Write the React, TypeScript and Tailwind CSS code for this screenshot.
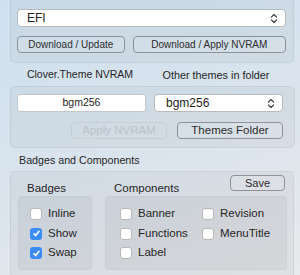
import React from "react";

const font = { fontFamily: '"Liberation Sans", Arial, sans-serif' };

function Chevrons() {
  return (
    <svg width="8" height="11" viewBox="0 0 8 11" fill="none" stroke="#444" strokeWidth="1.2" strokeLinecap="round" strokeLinejoin="round">
      <path d="M1.5 4 L4 1.5 L6.5 4" />
      <path d="M1.5 7 L4 9.5 L6.5 7" />
    </svg>
  );
}

function Check({ checked, label }: { checked?: boolean; label: string }) {
  return (
    <div className="flex items-center gap-[6px] h-[12px]">
      {checked ? (
        <div className="w-[12px] h-[12px] rounded-[3px] bg-[#3a8cf6] flex items-center justify-center">
          <svg width="9" height="9" viewBox="0 0 9 9" fill="none" stroke="white" strokeWidth="1.6" strokeLinecap="round" strokeLinejoin="round">
            <path d="M2 4.8 L3.7 6.6 L7 2.3" />
          </svg>
        </div>
      ) : (
        <div className="w-[12px] h-[12px] rounded-[3px] bg-white border border-[#b8b8b8]" />
      )}
      <span className="text-[11.5px] text-[#262626] leading-none">{label}</span>
    </div>
  );
}

function Btn({ children, className = "", disabled }: { children: React.ReactNode; className?: string; disabled?: boolean }) {
  return (
    <div
      className={
        "flex items-center justify-center rounded-[4px] border leading-none " +
        (disabled ? "border-[#c9ced3] text-[#bcc2c8] " : "border-[#8e9296] text-[#2d2d2d] bg-white/10 ") +
        className
      }
    >
      {children}
    </div>
  );
}

export default function App() {
  return (
    <div
      style={font}
      className="w-[300px] h-[275px] overflow-hidden bg-[linear-gradient(160deg,#cfe1f0_0%,#d8e3ed_45%,#e8e9eb_100%)] relative"
    >
      {/* Box 1 */}
      <div className="ml-[10px] w-[284px] mt-[-6px] h-[69px] rounded-[5px] bg-black/[0.035] border border-black/[0.05] pt-[14px] pl-[6px] pr-[7px]">
        <div className="h-[18px] rounded-[4px] bg-white border border-[#b9bcbf] flex items-center justify-between pl-[9px] pr-[7px]">
          <span className="text-[12px] text-[#1e1e1e]">EFI</span>
          <Chevrons />
        </div>
        <div className="flex mt-[9px] gap-[8px]">
          <Btn className="w-[108px] h-[17px] text-[10px]">Download / Update</Btn>
          <Btn className="w-[154px] h-[17px] text-[10px]">Download / Apply NVRAM</Btn>
        </div>
      </div>

      {/* labels */}
      <div className="flex h-[23px] items-center">
        <div className="w-[160px] text-center text-[10.5px] text-[#262626] pt-[1px]">Clover.Theme NVRAM</div>
        <div className="w-[112px] text-center text-[10.8px] text-[#262626] pt-[1px]">Other themes in folder</div>
      </div>

      {/* Box 2 */}
      <div className="ml-[10px] w-[285px] h-[62px] rounded-[5px] bg-black/[0.035] border border-black/[0.05] pt-[7px] pl-[6px] pr-[11px]">
        <div className="flex gap-[8px]">
          <div className="w-[129px] h-[18px] rounded-[3px] bg-white border border-[#c4c7ca] flex items-center justify-center text-[10.5px] text-[#1e1e1e]">
            bgm256
          </div>
          <div className="w-[129px] h-[18px] rounded-[4px] bg-white border border-[#b9bcbf] flex items-center justify-between pl-[11px] pr-[7px]">
            <span className="text-[12px] text-[#1e1e1e]">bgm256</span>
            <Chevrons />
          </div>
        </div>
        <div className="flex justify-end gap-[10px] mt-[10px]">
          <Btn disabled className="w-[96px] h-[17px] text-[11.5px]">Apply NVRAM</Btn>
          <Btn className="w-[106px] h-[17px] text-[11.5px]">Themes Folder</Btn>
        </div>
      </div>

      {/* Badges and Components */}
      <div className="pl-[19px] h-[23px] flex items-end pb-[5px] text-[10.7px] text-[#262626] leading-none">Badges and Components</div>
      <div className="ml-[10px] w-[284px] h-[110px] rounded-[5px] bg-black/[0.035] border border-black/[0.05] relative">
        <Btn className="absolute left-[219px] top-[3px] w-[55px] h-[16px] text-[11px]">Save</Btn>
        <div className="flex pl-[7px] pt-[11px] gap-[13px]">
          <div className="flex flex-col">
            <div className="pl-[9px] h-[13px] text-[11.5px] text-[#262626] leading-none">Badges</div>
            <div className="w-[74px] h-[74px] rounded-[4px] bg-black/[0.045] border border-black/[0.03] pl-[11px] pt-[11px] flex flex-col gap-[7.5px]">
              <Check label="Inline" />
              <Check checked label="Show" />
              <Check checked label="Swap" />
            </div>
          </div>
          <div className="flex flex-col">
            <div className="pl-[9px] h-[13px] text-[11.5px] text-[#262626] leading-none">Components</div>
            <div className="w-[182px] h-[74px] rounded-[4px] bg-black/[0.045] border border-black/[0.03] pl-[14px] pt-[11px] grid grid-cols-[82px_1fr] gap-y-[7.5px] content-start">
              <Check label="Banner" />
              <Check label="Revision" />
              <Check label="Functions" />
              <Check label="MenuTitle" />
              <Check label="Label" />
            </div>
          </div>
        </div>
      </div>
    </div>
  );
}
